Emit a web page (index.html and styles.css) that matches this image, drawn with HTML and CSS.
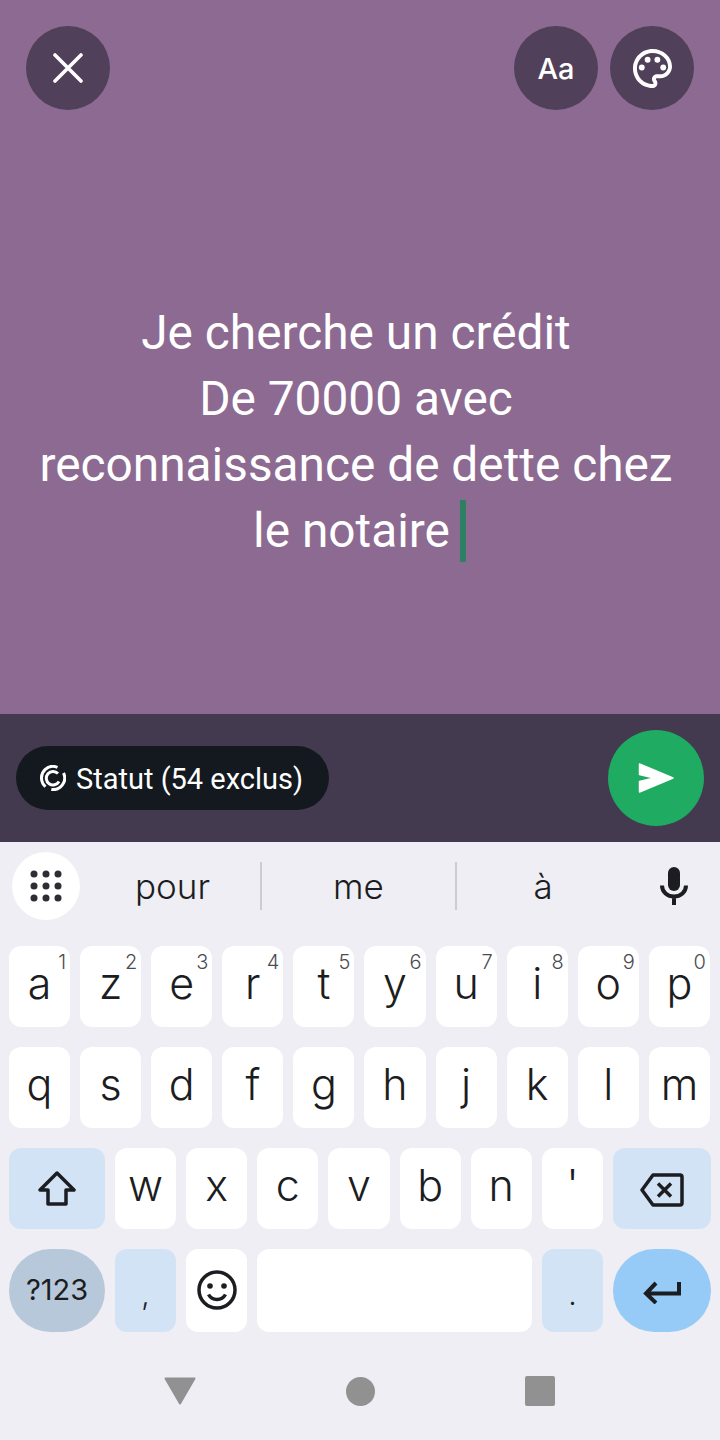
FILE: index.html
```html
<!DOCTYPE html>
<html lang="fr">
<head>
<meta charset="utf-8">
<title>Statut</title>
<link rel="stylesheet" href="styles.css">
</head>
<body>
<div class="screen">
  <section class="canvas">
    <div class="toolbar">
      <button class="round">
        <svg class="ic-close" viewBox="0 0 30 30"><path d="M2 2 28 28M28 2 2 28"/></svg>
      </button>
      <div class="tools">
        <button class="round aa">Aa</button>
        <button class="round">
          <svg class="ic-palette" viewBox="2 2 20 20"><path d="M12 22C6.49 22 2 17.51 2 12S6.49 2 12 2s10 4.04 10 9c0 3.31-2.69 6-6 6h-1.77c-.28 0-.5.22-.5.5 0 .12.05.23.13.33.41.47.64 1.06.64 1.67 0 1.38-1.12 2.5-2.5 2.5zm0-18c-4.41 0-8 3.59-8 8s3.59 8 8 8c.28 0 .5-.22.5-.5 0-.16-.08-.28-.14-.35-.41-.46-.63-1.05-.63-1.65 0-1.38 1.12-2.5 2.5-2.5H16c2.21 0 4-1.79 4-4 0-3.86-3.59-7-8-7z"/><circle cx="6.5" cy="11.5" r="1.5"/><circle cx="9.5" cy="7.5" r="1.5"/><circle cx="14.5" cy="7.5" r="1.5"/><circle cx="17.5" cy="11.5" r="1.5"/></svg>
        </button>
      </div>
    </div>
    <p class="message">Je cherche un crédit<br>De 70000 avec<br>reconnaissance de dette chez<br>le notaire<span class="caret"></span></p>
  </section>

  <section class="footer">
    <div class="pill">
      <svg class="ic-status" viewBox="0 0 26 26"><path d="M17.500 2.400A11.500 11.500 0 0 0 5 4.700 11.500 11.500 0 0 0 5.500 21.700M11.300 24.400A11.500 11.500 0 0 0 23.500 8"/><path d="M18 8.500A6.800 6.800 0 1 0 19 16.500"/></svg>
      <span class="pill-label">Statut (54 exclus)</span>
    </div>
    <button class="send">
      <svg class="ic-send" viewBox="0 0 36 30"><path d="M1.500 1 35 15 1.500 29V18.500L16 15 1.500 11.500Z"/></svg>
    </button>
  </section>

  <section class="keyboard">
    <div class="strip">
      <div class="grid-btn">
        <svg class="ic-dots" viewBox="0 0 32 32"><circle cx="4" cy="4" r="3.500"/><circle cx="16" cy="4" r="3.500"/><circle cx="28" cy="4" r="3.500"/><circle cx="4" cy="16" r="3.500"/><circle cx="16" cy="16" r="3.500"/><circle cx="28" cy="16" r="3.500"/><circle cx="4" cy="28" r="3.500"/><circle cx="16" cy="28" r="3.500"/><circle cx="28" cy="28" r="3.500"/></svg>
      </div>
      <div class="sugg s1">pour</div>
      <div class="sugg s2">me</div>
      <div class="sugg s3">à</div>
      <svg class="ic-mic" viewBox="0 0 28 38"><rect x="8" y="0" width="12" height="24" rx="6"/><path class="mic-line" d="M2 18.500c0 6.500 5.500 11 12 11s12-4.500 12-11M14 29v9"/></svg>
    </div>

    <div class="rows">
      <div class="row letters">
        <div class="key">a<sup class="hint">1</sup></div>
        <div class="key">z<sup class="hint">2</sup></div>
        <div class="key">e<sup class="hint">3</sup></div>
        <div class="key">r<sup class="hint">4</sup></div>
        <div class="key">t<sup class="hint">5</sup></div>
        <div class="key">y<sup class="hint">6</sup></div>
        <div class="key">u<sup class="hint">7</sup></div>
        <div class="key">i<sup class="hint">8</sup></div>
        <div class="key">o<sup class="hint">9</sup></div>
        <div class="key">p<sup class="hint">0</sup></div>
      </div>
      <div class="row letters">
        <div class="key">q</div>
        <div class="key">s</div>
        <div class="key">d</div>
        <div class="key">f</div>
        <div class="key">g</div>
        <div class="key">h</div>
        <div class="key">j</div>
        <div class="key">k</div>
        <div class="key">l</div>
        <div class="key">m</div>
      </div>
      <div class="row">
        <div class="key side-l mod">
          <svg class="ic-shift" viewBox="0 0 38 36"><path d="M19 2 36 19H28V33H10V19H2Z"/></svg>
        </div>
        <div class="key">w</div>
        <div class="key">x</div>
        <div class="key">c</div>
        <div class="key">v</div>
        <div class="key">b</div>
        <div class="key">n</div>
        <div class="key">'</div>
        <div class="key side-r mod icon-low">
          <svg class="ic-back" viewBox="0 0 44 34"><path d="M13 2H40a2 2 0 0 1 2 2V30a2 2 0 0 1-2 2H13L2 17Z"/><path d="M18 10.500 31 23.500M31 10.500 18 23.500"/></svg>
        </div>
      </div>
      <div class="row last">
        <div class="key side-l sym">?123</div>
        <div class="key mod punct">,</div>
        <div class="key">
          <svg class="ic-emoji" viewBox="0 0 40 40"><circle class="face" cx="20" cy="20" r="18"/><circle cx="13" cy="16" r="2.800"/><circle cx="27" cy="16" r="2.800"/><path class="face" d="M11.500 24.500c2 3.500 5 5 8.500 5s6.500-1.500 8.500-5"/></svg>
        </div>
        <div class="key space"></div>
        <div class="key mod punct">.</div>
        <div class="key side-r enter icon-low">
          <svg class="ic-enter" viewBox="0 0 38 24"><path d="M36 2V13.500H4M13 3 3 13.500 13 23"/></svg>
        </div>
      </div>
    </div>

    <nav class="nav">
      <div class="nav-cell"><svg class="ic-tri" viewBox="0 0 32 28"><path d="M1.500 1.500H30.500L16 26.500Z"/></svg></div>
      <div class="nav-cell"><span class="nav-circle"></span></div>
      <div class="nav-cell"><span class="nav-square"></span></div>
    </nav>
  </section>
</div>
</body>
</html>
```

FILE: styles.css
```css
* { box-sizing: border-box; }
html, body { margin: 0; padding: 0; }
body { width: 720px; height: 1440px; overflow: hidden; font-family: Roboto, "Liberation Sans", sans-serif; }
button { border: 0; padding: 0; margin: 0; font: inherit; color: inherit; }

.screen { display: flex; flex-direction: column; height: 1440px; }

.canvas { height: 714px; background: #8c6a91; color: #fff; display: flex; flex-direction: column; }
.toolbar { display: flex; justify-content: space-between; padding: 26px 26px 0; }
.tools { display: flex; gap: 12px; }
.round { width: 84px; height: 84px; border-radius: 50%; background: #50405a; display: flex; align-items: center; justify-content: center; }
.aa { font-family: Inter, Roboto, sans-serif; font-size: 29px; font-weight: 500; color: #fff; }
.ic-close { width: 30px; height: 30px; fill: none; stroke: #fff; stroke-width: 3.600; stroke-linecap: round; }
.ic-palette { width: 39px; height: 39px; fill: #fff; }

.message { margin: 190px 0 0; padding: 0 28px 0 20px; text-align: center; font-size: 47.800px; line-height: 66px; font-weight: 400; }
.caret { display: inline-block; width: 6px; height: 62px; margin: 0 -7px 0 10px; background: #2e8063; vertical-align: -15px; }

.footer { height: 128px; background: #443a50; display: flex; align-items: center; justify-content: space-between; padding: 0 16px; }
.pill { height: 64px; width: 313px; border-radius: 32px; background: #13191e; color: #fff; display: flex; align-items: center; gap: 10px; padding-left: 24px; font-size: 29px; }
.pill-label { padding-top: 2px; }
.ic-status { width: 26px; height: 26px; fill: none; stroke: #fff; stroke-width: 3; }
.send { width: 96px; height: 96px; border-radius: 50%; background: #1fab61; display: flex; align-items: center; justify-content: center; }
.ic-send { width: 36px; height: 30px; fill: #fff; stroke: #fff; stroke-width: 1.500; stroke-linejoin: round; }

.keyboard { flex: 1; background: #eeeef4; display: flex; flex-direction: column; color: #1c1d21; }
.strip { height: 104px; display: flex; align-items: center; padding: 0 0 16px 12px; font-family: Inter, Roboto, sans-serif; }
.grid-btn { width: 68px; height: 68px; border-radius: 50%; background: #fff; display: flex; align-items: center; justify-content: center; flex: none; }
.ic-dots { width: 32px; height: 32px; fill: #2d2e33; }
.sugg { height: 48px; display: flex; align-items: center; justify-content: center; font-size: 35px; font-weight: 300; flex: none; }
.s1 { width: 182px; padding-left: 5px; border-right: 2px solid #cccdd2; }
.s2 { width: 195px; border-right: 2px solid #cccdd2; }
.s3 { width: 172px; }
.ic-mic { width: 28px; height: 38px; margin-left: 31px; fill: #1c1d21; flex: none; }
.mic-line { fill: none; stroke: #1c1d21; stroke-width: 4; }

.rows { display: flex; flex-direction: column; gap: 20px; padding: 0 9px; }
.row { display: flex; gap: 10px; height: 81px; }
.row.letters { padding-right: 1px; }
.row.last { height: 83px; }
.key { position: relative; flex: 1 1 0; min-width: 0; background: #fff; border-radius: 12px; display: flex; align-items: center; justify-content: center; padding-bottom: 7px; font-family: Inter, Roboto, sans-serif; font-size: 43px; font-weight: 300; }
.hint { position: absolute; top: 4px; right: 4px; font-size: 20px; line-height: 24px; color: #4a4b50; font-weight: 300; vertical-align: baseline; }
.side-l { flex: 0 0 96px; padding-bottom: 0; }
.side-r { flex: 0 0 98px; }
.icon-low { padding: 2px 0 0; }
.mod { background: #d3e3f6; }
.space { flex: 0 0 275px; }
.punct { font-size: 30px; padding: 6px 0 0; }
.sym { background: #b6c8da; border-radius: 42px; font-size: 29px; font-weight: 400; padding-bottom: 2px; }
.enter { background: #96cbf7; border-radius: 42px; }
.ic-shift { width: 38px; height: 36px; fill: none; stroke: #1c1d21; stroke-width: 3.500; stroke-linejoin: round; }
.ic-back { width: 44px; height: 34px; fill: none; stroke: #1c1d21; stroke-width: 3.500; stroke-linejoin: round; }
.ic-emoji { width: 40px; height: 40px; margin-top: 6px; fill: #1c1d21; }
.face { fill: none; stroke: #1c1d21; stroke-width: 3.500; }
.ic-enter { width: 38px; height: 24px; fill: none; stroke: #1c1d21; stroke-width: 4; }

.nav { flex: 1; display: flex; justify-content: center; align-items: center; padding-top: 10px; }
.nav-cell { width: 180px; display: flex; justify-content: center; align-items: center; }
.ic-tri { width: 32px; height: 28px; fill: #919191; stroke: #919191; stroke-width: 2; stroke-linejoin: round; }
.nav-circle { width: 29px; height: 29px; border-radius: 50%; background: #919191; }
.nav-square { width: 30px; height: 30px; border-radius: 2px; background: #919191; }
```
